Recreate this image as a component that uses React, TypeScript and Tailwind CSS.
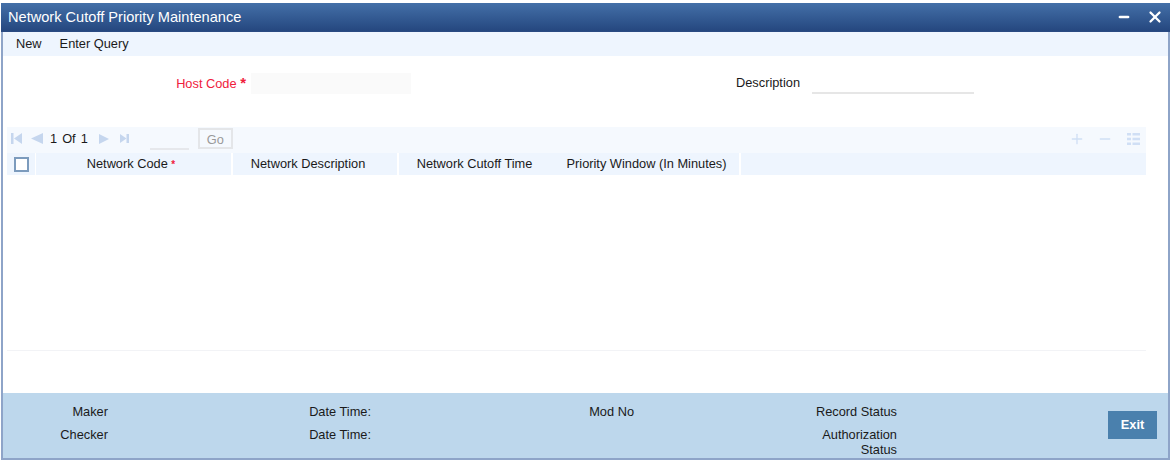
import { X, Minus, Plus } from "lucide-react";

function FooterCol({ top, bottom, width }: { top: string; bottom?: string; width: string }) {
  return (
    <div className={`flex flex-col items-end text-right ${width}`}>
      <div className="h-[23px] leading-[15px]">{top}</div>
      {bottom && <div className="w-[90px] leading-[15px]">{bottom}</div>}
    </div>
  );
}

function Pager() {
  return (
    <div className="flex h-[26px] items-center bg-[#f5f9fe] pb-[3px] pl-[4px] pr-[6px]">
      <svg width="11" height="11" viewBox="0 0 11 11" className="text-[#c5d6ee]" fill="currentColor">
        <rect x="0" y="0" width="2.5" height="11" />
        <path d="M11 0V11L3 5.5Z" />
      </svg>
      <svg width="12" height="11" viewBox="0 0 12 11" className="ml-[9px] text-[#c5d6ee]" fill="currentColor">
        <path d="M12 0V11L0 5.5Z" />
      </svg>
      <span className="ml-[7px]">1</span>
      <span className="ml-[5px]">Of</span>
      <span className="ml-[5px]">1</span>
      <svg width="10" height="10" viewBox="0 0 10 10" className="ml-[11px] text-[#c5d6ee]" fill="currentColor">
        <path d="M0 0V10L10 5Z" />
      </svg>
      <svg width="9" height="9" viewBox="0 0 9 9" className="ml-[11px] text-[#c5d6ee]" fill="currentColor">
        <path d="M0 0V9L6.5 4.5Z" />
        <rect x="6.5" y="0" width="2.5" height="9" />
      </svg>
      <div className="ml-[21px] h-[23px] w-[39px] self-start border-b-2 border-[#e6e8ec]" />
      <button className="ml-[9px] mt-[1px] h-[21px] w-[35px] self-start border-2 border-[#e4e6e9] text-[#9a9a9a]">Go</button>
      <div className="ml-auto flex items-center gap-[12px] text-[#d0dff5]">
        <Plus size={16} strokeWidth={2} />
        <Minus size={16} strokeWidth={2} />
        <svg width="13" height="12" viewBox="0 0 13 12" fill="currentColor" className="ml-[2px]">
          <rect x="0" y="0" width="4" height="2.5" />
          <rect x="5.5" y="0" width="7.5" height="2.5" />
          <rect x="0" y="4.75" width="4" height="2.5" />
          <rect x="5.5" y="4.75" width="7.5" height="2.5" />
          <rect x="0" y="9.5" width="4" height="2.5" />
          <rect x="5.5" y="9.5" width="7.5" height="2.5" />
        </svg>
      </div>
    </div>
  );
}

export default function App() {
  return (
    <div className="h-[467px] w-[1176px] bg-white pl-[1px] pt-[3px] font-['Liberation_Sans',Arial,sans-serif] text-[12.8px] text-[#1a1a1a]">
      <div className="flex h-[457px] w-[1169px] flex-col border-x-2 border-b-2 border-[#8ea4c8]">
        <div className="-mx-[2px] flex h-[29px] shrink-0 items-center justify-between border-b border-[#2a4a82] bg-gradient-to-b from-[#4470a8] to-[#25477f] pl-[7px] pr-[6px] text-white">
          <span className="text-[14.6px] leading-none">Network Cutoff Priority Maintenance</span>
          <div className="flex items-center gap-[15px]">
            <Minus size={14} strokeWidth={4.5} />
            <X size={18} strokeWidth={3} />
          </div>
        </div>

        <div className="flex h-[24px] shrink-0 items-center gap-[18px] bg-[#eef5fe] pl-[13px]">
          <span>New</span>
          <span>Enter Query</span>
        </div>

        <div className="flex flex-1 flex-col">
          <div className="flex h-[71px] shrink-0 items-start pt-[17px]">
            <div className="flex w-[408px] items-center">
              <div className="w-[243px] text-right text-[#f0203c]">
                Host Code <span className="text-[15px] font-bold leading-none">*</span>
              </div>
              <div className="ml-[5px] h-[21px] w-[160px] bg-[#fafafa]" />
            </div>
            <div className="w-[389px] text-right">Description</div>
            <div className="ml-[12px] h-[21px] w-[162px] border-b-2 border-[#e6e6e6]" />
          </div>

          <div className="ml-[4px] mr-[22px] flex h-[224px] shrink-0 flex-col border-b border-[#f2f3f6]">
            <Pager />
            <div className="flex h-[22px] items-center bg-[#eef5fe] text-center">
              <div className="flex w-[28px] justify-center">
                <div className="h-[15px] w-[15px] border-2 border-[#7c9bbd] bg-white" />
              </div>
              <div className="h-full w-[196px] border-l border-white pr-[5px] leading-[22px]">
                Network Code <span className="text-[10px] font-bold text-[#f0203c]">*</span>
              </div>
              <div className="h-full w-[166px] border-l-2 border-white pr-[14px] leading-[22px]">Network Description</div>
              <div className="h-full w-[153px] border-l-2 border-white leading-[22px]">Network Cutoff Time</div>
              <div className="h-full w-[191px] border-r-2 border-white pl-[4px] leading-[22px]">Priority Window (In Minutes)</div>
            </div>
          </div>
        </div>

        <div className="flex h-[65px] shrink-0 bg-[#bdd7ec] pt-[11px]">
          <FooterCol width="w-[105px]" top="Maker" bottom="Checker" />
          <FooterCol width="w-[263px]" top="Date Time:" bottom="Date Time:" />
          <FooterCol width="w-[263px]" top="Mod No" />
          <FooterCol width="w-[263px]" top="Record Status" bottom="Authorization Status" />
          <button className="ml-auto mr-[11px] mt-[7px] h-[28px] w-[49px] bg-[#4a80ad] font-bold text-white">Exit</button>
        </div>
      </div>
    </div>
  );
}
